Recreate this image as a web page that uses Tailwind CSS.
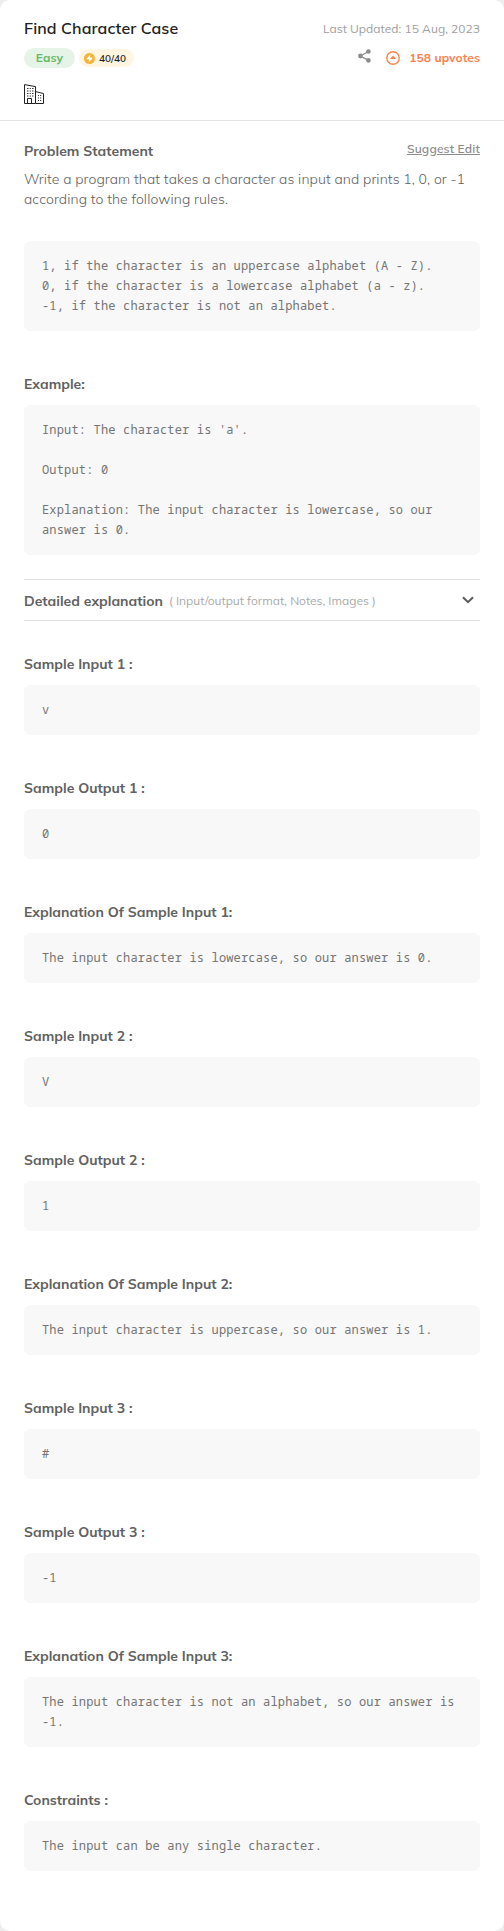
<!DOCTYPE html>
<html lang="en">
<head>
<meta charset="utf-8">
<title>Find Character Case</title>
<script src="https://cdn.jsdelivr.net/npm/@tailwindcss/browser@4"></script>
</head>
<body class="bg-[#eeeeee]">
<main class="h-[1931px] w-[504px] overflow-hidden rounded-[10px] bg-white font-['Mulish','Lato',sans-serif] text-[#616161]">
  <header class="h-[121px] border-b border-[#e4e4e4] px-6 pt-4">
    <div class="flex h-6 items-center justify-between">
      <h1 class="text-base leading-6 font-semibold tracking-[0.1px] text-[#212121]">Find Character Case</h1>
      <span class="pt-0.5 text-xs tracking-[0.03px] text-[#9e9e9e]">Last Updated: 15 Aug, 2023</span>
    </div>
    <div class="mt-2 flex h-5 items-center">
      <span class="flex h-5 w-[51px] items-center justify-center rounded-full bg-[#e6f3e7] text-xs font-bold tracking-[0.1px] text-[#66bb6a]">Easy</span>
      <span class="ml-1 flex h-[18px] w-[55px] items-center gap-[4.5px] rounded-full bg-[#fff5e1] pl-[4.5px] text-[10px] font-semibold text-[#212121]">
        <svg class="size-[11px] shrink-0" viewBox="0 0 11 11"><circle cx="5.5" cy="5.5" r="5.5" fill="#f9b233"/><path d="M6.3 1.3 2.3 6.2h2.5v3.6l4-5H6.3z" fill="#fff"/></svg>40/40</span>
      <svg class="-mt-1 ml-auto h-[14px] w-[13px]" viewBox="0 0 13 14" fill="#8c8c8c"><circle cx="10.4" cy="2.5" r="2.3"/><circle cx="2.5" cy="7" r="2.4"/><circle cx="10.4" cy="11.4" r="2.3"/><path d="M10.4 2.5 2.5 7l7.9 4.4" fill="none" stroke="#8c8c8c" stroke-width="1.3"/></svg>
      <svg class="ml-[15px] size-[14px]" viewBox="0 0 14 14"><circle cx="7" cy="7" r="6.2" fill="none" stroke="#ff8447" stroke-width="1.4"/><path d="M7 4.6 9.7 7.4v.7H4.3v-.7z" fill="#ff8447"/></svg>
      <span class="ml-[9px] text-xs font-bold tracking-[0.08px] text-[#ff7f50]">158 upvotes</span>
    </div>
    <svg class="mt-4 size-5" viewBox="0 0 20 20" fill="none" stroke="#222" stroke-width="1"><path d="M.5 19.5V.6l11 2v16.9zM11.5 7.6l8 1.9v10h-8M3.5 19.5v-5h4v5"/><path stroke-width=".9" d="M3 4.5h1.5M5.7 4.5h1.2M8 4.5h1.5M3 7h1.5M5.7 7h1.2M8 7h1.5M3 9.5h1.5M5.7 9.5h1.2M8 9.5h1.5M3 12h1.5M5.7 12h1.2M8 12h1.5M14 11.5h1M16 11.5h1.2M14 14h1M16 14h1.2M14 16.5h1M16 16.5h1.2"/></svg>
  </header>

  <div class="px-6">
    <div class="mt-[18px] flex h-6 items-start justify-between">
      <h2 class="self-center text-sm leading-6 font-bold">Problem Statement</h2>
      <a class="text-xs leading-5 font-semibold tracking-[0.17px] text-[#8c8c8c] underline">Suggest Edit</a>
    </div>
    <p class="mt-1.5 text-sm leading-5 font-light tracking-[0.09px] whitespace-nowrap text-[#616161]">Write a program that takes a character as input and prints 1, 0, or -1<br>according to the following rules.</p>
    <pre class="mt-[32px] rounded-md bg-[#f8f8f8] px-[18px] py-[15px] font-['Noto_Sans_Mono','Liberation_Mono',monospace] text-xs leading-5 tracking-[0.17px] text-[#757575]">1, if the character is an uppercase alphabet (A - Z).
0, if the character is a lowercase alphabet (a - z).
-1, if the character is not an alphabet.</pre>

    <h3 class="mt-[41px] text-sm leading-6 font-bold">Example:</h3>
    <pre class="mt-[9px] rounded-md bg-[#f8f8f8] px-[18px] py-[15px] font-['Noto_Sans_Mono','Liberation_Mono',monospace] text-xs leading-5 tracking-[0.17px] text-[#757575]">Input: The character is 'a'.

Output: 0

Explanation: The input character is lowercase, so our
answer is 0.</pre>

    <div class="mt-6 flex h-[42px] items-center border-y border-[#e4e4e4] pt-px">
      <h3 class="text-sm leading-5 font-bold">Detailed explanation</h3>
      <span class="ml-1.5 pt-px text-xs text-[#aaaaaa]">( Input/output format, Notes, Images )</span>
      <svg class="-mt-0.5 mr-1.5 ml-auto h-2 w-3" viewBox="0 0 12 8" fill="none" stroke="#5a5a5a" stroke-width="2"><path d="m1 1.2 5 5 5-5"/></svg>
    </div>

    <h3 class="mt-[31px] text-sm leading-6 font-bold">Sample Input 1 :</h3>
    <pre class="mt-[9px] rounded-md bg-[#f8f8f8] px-[18px] py-[15px] font-['Noto_Sans_Mono','Liberation_Mono',monospace] text-xs leading-5 tracking-[0.17px] text-[#757575]">v</pre>

    <h3 class="mt-[41px] text-sm leading-6 font-bold">Sample Output 1 :</h3>
    <pre class="mt-[9px] rounded-md bg-[#f8f8f8] px-[18px] py-[15px] font-['Noto_Sans_Mono','Liberation_Mono',monospace] text-xs leading-5 tracking-[0.17px] text-[#757575]">0</pre>

    <h3 class="mt-[41px] text-sm leading-6 font-bold">Explanation Of Sample Input 1:</h3>
    <pre class="mt-[9px] rounded-md bg-[#f8f8f8] px-[18px] py-[15px] font-['Noto_Sans_Mono','Liberation_Mono',monospace] text-xs leading-5 tracking-[0.17px] text-[#757575]">The input character is lowercase, so our answer is 0.</pre>

    <h3 class="mt-[41px] text-sm leading-6 font-bold">Sample Input 2 :</h3>
    <pre class="mt-[9px] rounded-md bg-[#f8f8f8] px-[18px] py-[15px] font-['Noto_Sans_Mono','Liberation_Mono',monospace] text-xs leading-5 tracking-[0.17px] text-[#757575]">V</pre>

    <h3 class="mt-[41px] text-sm leading-6 font-bold">Sample Output 2 :</h3>
    <pre class="mt-[9px] rounded-md bg-[#f8f8f8] px-[18px] py-[15px] font-['Noto_Sans_Mono','Liberation_Mono',monospace] text-xs leading-5 tracking-[0.17px] text-[#757575]">1</pre>

    <h3 class="mt-[41px] text-sm leading-6 font-bold">Explanation Of Sample Input 2:</h3>
    <pre class="mt-[9px] rounded-md bg-[#f8f8f8] px-[18px] py-[15px] font-['Noto_Sans_Mono','Liberation_Mono',monospace] text-xs leading-5 tracking-[0.17px] text-[#757575]">The input character is uppercase, so our answer is 1.</pre>

    <h3 class="mt-[41px] text-sm leading-6 font-bold">Sample Input 3 :</h3>
    <pre class="mt-[9px] rounded-md bg-[#f8f8f8] px-[18px] py-[15px] font-['Noto_Sans_Mono','Liberation_Mono',monospace] text-xs leading-5 tracking-[0.17px] text-[#757575]">#</pre>

    <h3 class="mt-[41px] text-sm leading-6 font-bold">Sample Output 3 :</h3>
    <pre class="mt-[9px] rounded-md bg-[#f8f8f8] px-[18px] py-[15px] font-['Noto_Sans_Mono','Liberation_Mono',monospace] text-xs leading-5 tracking-[0.17px] text-[#757575]">-1</pre>

    <h3 class="mt-[41px] text-sm leading-6 font-bold">Explanation Of Sample Input 3:</h3>
    <pre class="mt-[9px] rounded-md bg-[#f8f8f8] px-[18px] py-[15px] font-['Noto_Sans_Mono','Liberation_Mono',monospace] text-xs leading-5 tracking-[0.17px] text-[#757575]">The input character is not an alphabet, so our answer is
-1.</pre>

    <h3 class="mt-[41px] text-sm leading-6 font-bold">Constraints :</h3>
    <pre class="mt-[9px] rounded-md bg-[#f8f8f8] px-[18px] py-[15px] font-['Noto_Sans_Mono','Liberation_Mono',monospace] text-xs leading-5 tracking-[0.17px] text-[#757575]">The input can be any single character.</pre>
  </div>
</main>
</body>
</html>
